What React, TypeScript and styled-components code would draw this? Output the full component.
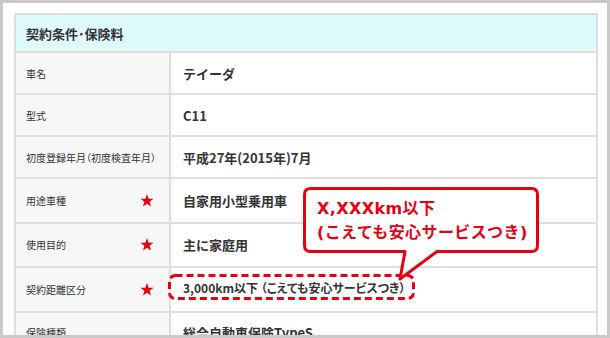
import React from 'react'
import styled, { createGlobalStyle } from 'styled-components'

const JP = `"Noto Sans CJK JP", "Noto Sans", sans-serif`
const RED = '#e60012'
const LINE = '#dedede'

const GlobalStyle = createGlobalStyle`
  html, body {
    margin: 0;
    padding: 0;
    background: #ffffff;
  }
`

type Row = {
  label: string
  value: string
  required?: boolean
  marked?: boolean
}

const rows: Row[] = [
  { label: '車名', value: 'テイーダ' },
  { label: '型式', value: 'C11' },
  { label: '初度登録年月（初度検査年月）', value: '平成27年(2015年)7月' },
  { label: '用途車種', value: '自家用小型乗用車', required: true },
  { label: '使用目的', value: '主に家庭用', required: true },
  { label: '契約距離区分', value: '3,000km以下 （こえても安心サービスつき）', required: true, marked: true },
  { label: '保険種類', value: '総合自動車保険TypeS' },
]

const Star = () => (
  <StarIcon viewBox="0 0 24 23" aria-hidden>
    <polygon points="12,0 14.9,8.3 23.6,8.4 16.6,13.7 19.2,22.1 12,17.1 4.8,22.1 7.4,13.7 0.4,8.4 9.1,8.3" />
  </StarIcon>
)

const App = () => {
  return (
    <>
      <GlobalStyle />
      <Frame>
        <Table>
          <Heading>契約条件･保険料</Heading>
          {rows.map((row) => (
            <TableRow key={row.label} $tall={row.required}>
              <Label>
                <span>{row.label}</span>
                {row.required && <Star />}
              </Label>
              <Value>
                {row.marked ? (
                  <Mark>
                    <MarkFrame viewBox="0 0 247 26" aria-hidden>
                      <rect x="1.5" y="1.5" width="244" height="23" rx="6" ry="6" />
                    </MarkFrame>
                    <MarkText>{row.value}</MarkText>
                  </Mark>
                ) : (
                  row.value
                )}
              </Value>
            </TableRow>
          ))}
        </Table>

        <Callout>
          <Bubble viewBox="0 0 238 96" aria-hidden>
            <path d="M7.5 1.5 H228.5 Q234.5 1.5 234.5 7.5 V58.5 Q234.5 64.5 228.5 64.5 H134 L97 92 L102 64.5 H7.5 Q1.5 64.5 1.5 58.5 V7.5 Q1.5 1.5 7.5 1.5 Z" />
          </Bubble>
          <CalloutText>
            X,XXXkm以下
            <br />
            (こえても安心サービスつき)
          </CalloutText>
        </Callout>
      </Frame>
    </>
  )
}

const Frame = styled.div`
  position: relative;
  box-sizing: border-box;
  width: 610px;
  height: 338px;
  padding: 10px 9px 0 11px;
  border: 3px solid #c9c9c9;
  background: #ffffff;
  overflow: hidden;
`

const Table = styled.div`
  width: 584px;
  box-sizing: border-box;
  border: 2px solid ${LINE};
  border-bottom: none;
  font-family: ${JP};
  color: #333333;
`

const Heading = styled.div`
  display: flex;
  align-items: center;
  height: 36px;
  padding-left: 10px;
  background: #dffafd;
  border-bottom: 2px solid ${LINE};
  font-size: 13px;
  font-weight: 700;
`

const TableRow = styled.div<{ $tall?: boolean }>`
  display: grid;
  grid-template-columns: 155px 1fr;
  height: ${(p) => (p.$tall ? 42.5 : 40)}px;
  border-bottom: 2px solid ${LINE};
`

const Label = styled.div`
  display: flex;
  align-items: center;
  justify-content: space-between;
  padding: 0 15px 0 10px;
  background: #f7f7f7;
  border-right: 2px solid ${LINE};
  font-size: 10px;
  font-feature-settings: "palt";
  white-space: nowrap;
`

const StarIcon = styled.svg`
  width: 14px;
  height: 13px;
  fill: ${RED};
  flex-shrink: 0;
`

const Value = styled.div`
  display: flex;
  align-items: center;
  padding-left: 12px;
  font-size: 13px;
  font-weight: 700;
  white-space: nowrap;
`

const Mark = styled.div`
  position: relative;
  display: flex;
  align-items: center;
  width: 247px;
  height: 26px;
  margin: 0 0 4px -15px;
  padding-left: 15px;
  box-sizing: border-box;
`

const MarkFrame = styled.svg`
  position: absolute;
  inset: 0;
  width: 247px;
  height: 26px;
  fill: none;
  stroke: ${RED};
  stroke-width: 3;
  stroke-dasharray: 7 4;
`

const MarkText = styled.span`
  position: relative;
  font-size: 12px;
  font-weight: 700;
  font-feature-settings: "palt";
  white-space: pre;
`

const Callout = styled.div`
  position: absolute;
  left: 300px;
  top: 184px;
  width: 238px;
  height: 96px;
`

const Bubble = styled.svg`
  position: absolute;
  inset: 0;
  width: 238px;
  height: 96px;
  fill: #ffffff;
  stroke: ${RED};
  stroke-width: 3;
  stroke-linejoin: round;
`

const CalloutText = styled.div`
  position: relative;
  padding: 10px 0 0 14px;
  font-family: "DejaVu Sans", ${JP};
  font-size: 16px;
  font-weight: 700;
  line-height: 24px;
  letter-spacing: 0.4px;
  color: ${RED};
  white-space: nowrap;
`

export default App
